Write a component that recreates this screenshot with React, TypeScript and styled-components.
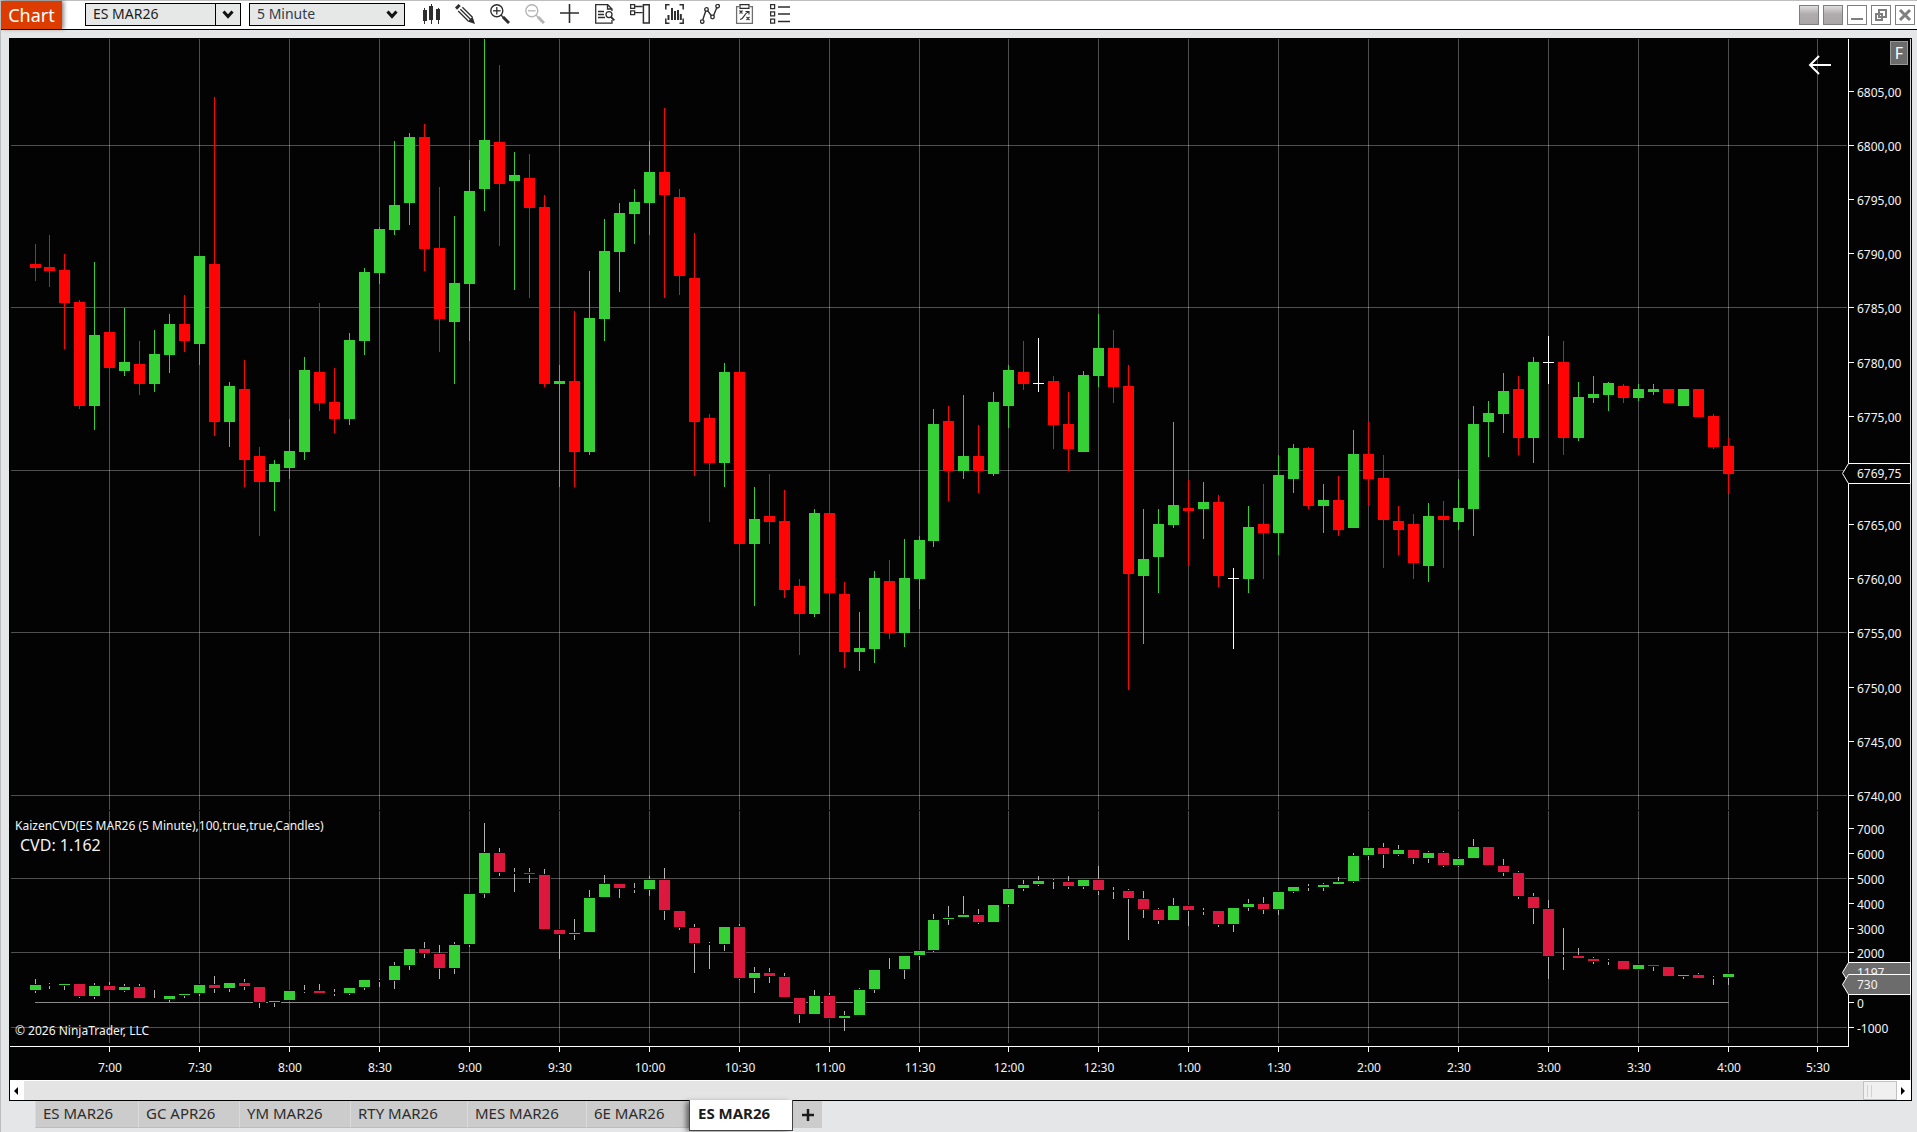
import React from "react";
import styled, { createGlobalStyle, css } from "styled-components";

const uiFont = `"Noto Sans", "Open Sans", sans-serif`;

const GlobalStyle = createGlobalStyle`
  *, *::before, *::after { box-sizing: border-box; }
  body { margin: 0; background: #e5e6e8; font-family: ${uiFont}; }
  button, input, select { font-family: inherit; margin: 0; }
`;

const Window = styled.div`
  min-height: 100vh;
  display: flex;
  flex-direction: column;
  background: #e5e6e8;
  border-left: 1px solid #bcbcbe;
  overflow: hidden;
`;

/* ---------- toolbar ---------- */

const Toolbar = styled.header`
  display: flex;
  align-items: stretch;
  height: 30px;
  background: #fff;
  border-top: 1px solid #bebebe;
  border-bottom: 1px solid #000;
`;

const MenuButton = styled.button`
  width: 61px;
  padding: 0;
  border: 0;
  background: #dc3c00;
  color: #fff;
  font-size: 18px;
  line-height: 28px;
  box-shadow: 2px 0 4px rgba(0, 0, 0, 0.45);
`;

const Combo = styled.div`
  position: relative;
  display: flex;
  width: 156px;
  height: 23px;
  margin-top: 2px;
  margin-left: 23px;
  border: 1px solid #000;
  background: #e6e8e7;
`;

const ComboInput = styled.input`
  flex: 1;
  min-width: 0;
  padding: 0 0 2px 7px;
  border: 0;
  background: transparent;
  color: #1c1c1c;
  font-size: 14px;
  line-height: 19px;
`;

const ComboButton = styled.button`
  display: grid;
  place-items: center;
  width: 25px;
  padding: 0;
  border: 0;
  border-left: 1px solid #000;
  background: transparent;
`;

const IntervalCombo = styled(Combo)`
  margin-left: 8px;
`;

const IntervalSelect = styled.select`
  flex: 1;
  padding: 0 0 2px 7px;
  border: 0;
  appearance: none;
  background: transparent;
  color: #35394a;
  font-size: 14px;
  line-height: 19px;
`;

const SelectArrow = styled.span`
  position: absolute;
  inset: 0 6px 0 auto;
  display: grid;
  place-items: center;
  pointer-events: none;
`;

const Tools = styled.div`
  display: flex;
  gap: 15px;
  margin-top: 3px;
  margin-left: 15px;
`;

const ToolButton = styled.button<{ $dim?: boolean }>`
  width: 20px;
  height: 20px;
  padding: 0;
  border: 0;
  background: transparent;
  color: ${(p) => (p.$dim ? "#b4b4b4" : "#2e2e2e")};

  svg { display: block; }
`;

const WindowButtons = styled.div`
  display: flex;
  gap: 4px;
  margin: 4px 2px 0 auto;
`;

const WindowButton = styled.button<{ $filled?: boolean }>`
  width: 20px;
  height: 20px;
  padding: 0;
  border: 1px solid #7f7f7f;
  background: ${(p) =>
    p.$filled ? "linear-gradient(#dedcdd, #b0acae 45%, #aaa6a8)" : "#fff"};

  svg { display: block; }
`;

/* ---------- chart ---------- */

const Frame = styled.main`
  margin: 8px 5px 0 8px;
  border: 1px solid #000;
  background: #030303;
`;

const ChartArea = styled.section`
  position: relative;
`;

const Plot = styled.svg`
  display: block;
  width: 100%;
  height: auto;
  font-family: ${uiFont};
  font-size: 12px;
`;

const FixedScaleButton = styled.button`
  position: absolute;
  top: 2px;
  right: 3px;
  width: 18px;
  height: 24px;
  padding: 0;
  border: 1px solid #989898;
  background: #6b6b6b;
  color: #fff;
  font-size: 16px;
  line-height: 22px;
`;

const BackButton = styled.button`
  position: absolute;
  top: 15px;
  right: 79px;
  width: 24px;
  height: 22px;
  padding: 0;
  border: 0;
  background: transparent;

  svg { display: block; }
`;

const ScrollBar = styled.div`
  display: flex;
  align-items: stretch;
  height: 20px;
  border-top: 1px solid #fff;
  background: #e4e4e4;
`;

const ScrollArrow = styled.button`
  display: grid;
  place-items: center;
  width: 14px;
  padding: 0 2px 0 0;
  border: 0;
  background: #fff;
`;

const ScrollThumb = styled.div`
  display: flex;
  align-items: center;
  gap: 3px;
  width: 34px;
  margin-left: auto;
  padding-left: 3px;
  border: 1px solid #c2c2c2;
  background: #f0f0f0;

  &::before, &::after {
    content: "";
    width: 1px;
    height: 12px;
    background: #d2d2d2;
  }
`;

/* ---------- tabs ---------- */

const Tabs = styled.nav`
  display: flex;
  align-items: flex-start;
  height: 31px;
  padding-left: 34px;
`;

const Tab = styled.button<{ $width: number; $active?: boolean }>`
  width: ${(p) => p.$width}px;
  height: 27px;
  padding: 0 0 2px 7px;
  border: 0;
  border-left: 1px solid #dadada;
  border-bottom: 1px solid #bcbcbc;
  background: #cccccc;
  color: #2c2c2c;
  font-size: 15px;
  line-height: 24px;
  text-align: left;
  white-space: nowrap;

  ${(p) =>
    p.$active &&
    css`
      height: 31px;
      margin-top: -1px;
      padding: 0 0 5px 8px;
      border: solid #444;
      border-width: 0 1px 1px 1px;
      background: #fff;
      color: #1c1c1c;
      font-weight: 700;
      box-shadow: -4px 1px 5px -1px rgba(0, 0, 0, 0.5);
      position: relative;
    `}
`;

const AddTab = styled.button`
  display: grid;
  place-items: center;
  width: 29px;
  height: 27px;
  padding: 0;
  border: 0;
  background: #cccccc;
`;

/* ---------- icons ---------- */

const Chevron = () => (
  <svg width="12" height="10" viewBox="0 0 12 10" fill="none" stroke="#111" strokeWidth="3">
    <path d="M1.5 1.5 6 6.6 10.5 1.5" />
  </svg>
);

const Icon = ({ children }: { children: React.ReactNode }) => (
  <svg width="20" height="20" viewBox="0 0 20 20" fill="none" stroke="currentColor">
    {children}
  </svg>
);

const Magnifier = ({ plus }: { plus?: boolean }) => (
  <Icon>
    <circle cx="6.8" cy="6.8" r="6" strokeWidth="1.4" />
    <path d="M3 6.8h7.6" strokeWidth="1.3" />
    {plus && <path d="M6.8 3v7.6" strokeWidth="1.3" />}
    <path d="m11 11 2.4 2.4" strokeWidth="1.4" />
    <path d="m13 13 6 6" strokeWidth="3" />
  </Icon>
);

const tools: { label: string; dim?: boolean; icon: React.ReactNode }[] = [
  {
    label: "Chart style",
    icon: (
      <Icon>
        <g fill="currentColor" stroke="none">
          <path d="M3 6h4v11H3zM9 2h4v14H9zM16 5h4v11h-4z" />
          <path d="M4 4h1v16H4zM11 0h1v20h-1zM18 4h1v16h-1z" />
        </g>
      </Icon>
    ),
  },
  {
    label: "Drawing tools",
    icon: (
      <Icon>
        <path d="M1 4.6 4.6 1" strokeWidth="3" />
        <path d="m3.2 7 10 10M5.4 5.2l10 10M7.4 3.2l10 10" strokeWidth="1.3" />
        <path d="m12.6 17.4 5-4.6 2.4 7.2z" fill="currentColor" stroke="none" />
      </Icon>
    ),
  },
  { label: "Zoom in", icon: <Magnifier plus /> },
  { label: "Zoom out", dim: true, icon: <Magnifier /> },
  {
    label: "Crosshair",
    icon: (
      <Icon>
        <path d="M9.5 0v19M0 9h19" strokeWidth="1.6" />
      </Icon>
    ),
  },
  {
    label: "Data box",
    icon: (
      <Icon>
        <path d="M15 19.2H.7V.7h12L17 5v2M12.5.7V5H17M17 16v3.2h-3" strokeWidth="1.3" />
        <path d="M3 7.5h6M3 10.5h6M3 13.5h7" strokeWidth="1.4" />
        <circle cx="14" cy="10.6" r="3" strokeWidth="1.3" />
        <path d="m16 13 3.4 3.4" strokeWidth="1.8" />
      </Icon>
    ),
  },
  {
    label: "Chart trader",
    icon: (
      <Icon>
        <path d="M.6.6h4v3.8h-4zM.6 6.8h4v3.8h-4zM4.6 2.5h8M4.6 8.7h8" strokeWidth="1.3" />
        <path d="M13.4.7h5.8v18.4h-5.8z" strokeWidth="1.5" />
      </Icon>
    ),
  },
  {
    label: "Data series",
    icon: (
      <Icon>
        <path d="M4.5.8H.8v4.7M14.5.8h3.7v4.7M4.5 19.2H.8v-4.7M14.5 19.2h3.7v-4.7" strokeWidth="1.5" />
        <path d="M3.5 11v5M7 4v12M10 7v9M13 6v10M15.8 10v6" strokeWidth="2" />
      </Icon>
    ),
  },
  {
    label: "Indicators",
    icon: (
      <Icon>
        <path d="m2.8 15.8 3-9M7.6 6.6l4 5.4M13.4 12l3.6-9" strokeWidth="1.4" />
        <circle cx="2.2" cy="17.6" r="1.8" strokeWidth="1.3" />
        <circle cx="6.5" cy="5.4" r="1.8" strokeWidth="1.3" />
        <circle cx="12.5" cy="13" r="1.8" strokeWidth="1.3" />
        <circle cx="17.6" cy="2.2" r="1.8" strokeWidth="1.3" />
      </Icon>
    ),
  },
  {
    label: "Strategies",
    icon: (
      <Icon>
        <path d="M4 2.6H1.6v16.7h15.8V2.6H15" stroke="#6e6e6e" strokeWidth="1.3" />
        <path d="M5 .7h9v3.6H5z" strokeWidth="1.2" />
        <path d="m4.5 6.5 3 3m0-3-3 3M11.5 13l3 3m0-3-3 3M5 15.5c4 0 3.5-6 8.5-7.5M10.5 7.5H14v3" strokeWidth="1.1" />
      </Icon>
    ),
  },
  {
    label: "Properties",
    icon: (
      <Icon>
        <path d="M.6.6h4v4h-4zM.6 7.8h4v4h-4zM.6 15.2h4v4h-4z" strokeWidth="1.3" />
        <path d="M8 3h12M8 10h12M8 17.5h12" strokeWidth="1.5" />
      </Icon>
    ),
  },
];

/* ---------- chart data ---------- */

// Each bar: colour key, then wick top, body top, body bottom and wick bottom in plot units.
type Bar = [string, number, number, number, number];

const parseBars = (source: string): Bar[] =>
  source
    .trim()
    .split(/\s+/)
    .map((item) => {
      const [a, b, c, d] = item.slice(1).split(",").map(Number);
      return [item[0], a, b, c, d];
    });

const priceBars = parseBars(`
R244,264,268,281 R235,267,271,287 R254,270,303,349 R300,302,406,409 G262,335,406,430
R298,332,368,376 G308,362,371,376 R341,364,384,395 G330,354,384,392 G314,324,355,373
R295,324,341,352 G256,256,344,365 R97,264,422,436 G382,386,422,447 R360,389,460,487
R447,456,482,536 G460,464,482,511 G419,451,468,479 G357,370,452,460 R303,372,403,411
R368,402,419,433 G333,340,419,425 G268,272,341,355 G227,229,273,284 G141,205,230,235
G133,137,203,225 R124,137,249,271 R187,248,319,352 G216,283,322,384 G160,191,284,341
G39,140,189,211 R65,142,184,246 G152,175,181,290 R154,178,208,298 R195,207,384,387
G365,381,384,487 R311,381,452,487 G271,318,452,455 G219,251,319,341 G203,213,252,292
G189,202,214,244 G141,172,203,235 R108,172,195,298 R189,197,276,295 R233,278,422,476
R414,418,463,522 G363,372,463,487 R341,372,544,552 G487,519,544,606 R474,516,522,544
R490,521,590,598 R579,586,614,655 G509,513,614,617 R503,513,593,601 R582,594,652,668
G612,648,652,671 G571,578,649,663 R560,581,633,639 G539,578,633,647 G536,540,579,609
G409,424,541,547 R406,421,471,501 G395,456,471,479 R425,456,471,493 G392,402,474,476
G365,370,406,428 R341,372,384,390 W338,383,384,392 R376,381,425,449 R392,424,449,471
G371,375,452,452 G314,348,376,387 R330,348,387,403 R365,386,574,690 G509,559,576,644
G509,524,557,593 G422,505,525,528 R480,508,511,566 G482,502,509,539 R495,502,576,587
W568,578,579,649 G506,527,579,593 R484,524,533,579 G455,475,533,555 G444,448,479,493
R447,448,506,509 G484,500,506,533 R476,500,530,536 G430,454,528,528 R422,454,479,506
R455,478,520,568 R506,521,530,555 R514,524,563,579 G503,516,566,582 R501,516,520,568
G479,508,522,530 G406,424,509,536 G401,413,422,457 G373,391,414,433 R376,389,438,455
G357,362,438,463 W336,362,363,384 R341,362,438,455 G382,397,438,441 G376,394,398,403
G382,383,395,411 R384,386,398,403 G384,389,398,401 G384,389,392,395 R389,389,403,403
G389,389,406,406 R389,389,417,417 R414,416,447,449 R438,446,474,493
`);

const cvdBars = parseBars(`
G979,985,990,993 D983,985,985,989 G984,984,985,990 R984,984,996,998 G983,986,996,999
R982,986,990,990 G984,987,990,992 R984,987,998,998 D990,999,999,998 G996,996,999,1002
G994,994,995,998 G984,985,993,996 R976,985,988,993 G982,983,988,992 R979,983,986,990
R987,987,1002,1008 G1001,1001,1002,1007 G990,991,1000,1000 D985,991,991,993 R984,991,993,993
D989,993,993,996 G988,988,993,995 G980,980,987,990 D979,981,981,987 G962,966,980,989
G949,949,965,970 R942,949,953,958 R945,954,968,979 G942,945,968,974 G893,894,944,947
G823,853,893,898 R848,853,872,876 D868,873,873,892 R868,873,874,883 R869,875,929,929
R930,930,934,959 G919,933,934,940 G890,898,932,932 G875,884,897,897 R884,884,888,898
D883,889,889,893 G876,880,889,896 R868,880,910,920 R911,911,927,930 R924,928,943,973
D942,944,944,969 G927,927,944,951 R924,927,978,980 G967,973,978,993 R968,973,976,983
R973,977,997,997 R998,998,1014,1023 G990,996,1014,1014 R993,996,1018,1018 G1011,1016,1018,1031
G988,990,1015,1015 G970,970,989,993 D958,970,970,969 G956,956,969,979 G951,951,955,960
G914,920,950,952 G906,918,919,925 G896,915,917,917 R909,915,922,924 G905,905,922,922
G889,889,904,907 G880,885,888,891 G876,881,884,886 D879,881,881,889 R876,882,886,889
G880,880,886,889 R866,880,890,895 D887,891,891,899 R889,891,898,940 R891,899,909,918
R908,910,920,924 G898,906,920,920 R905,906,910,926 D908,911,911,915 R911,911,924,927
G908,908,924,932 G899,904,907,911 R897,904,909,914 G892,892,909,915 G887,887,891,893
D884,887,887,891 G883,885,887,891 G877,882,884,884 G853,856,881,883 G848,848,855,860
R843,848,854,868 G845,850,854,856 R850,850,858,864 G851,853,858,863 R851,853,865,867
G857,859,865,867 G839,847,858,858 R847,847,865,865 R859,866,872,876 R871,873,896,899
R893,897,908,924 R900,909,956,979 D928,956,956,970 R948,956,958,958 R957,959,961,964
D959,961,961,965 R961,961,969,969 G965,965,969,969 R965,965,966,971 R967,967,976,976
G975,975,976,979 R973,975,978,978 D976,978,978,985 G974,974,977,985
`);

const BAR_STEP = 14.983;
const barX = (index: number) => Math.floor(35.01 + index * BAR_STEP);

const timeLabels = [
  "7:00", "7:30", "8:00", "8:30", "9:00", "9:30", "10:00", "10:30", "11:00", "11:30",
  "12:00", "12:30", "1:00", "1:30", "2:00", "2:30", "3:00", "3:30", "4:00", "5:30",
].map((text, n) => ({ text, x: barX(5 + n * 6) }));

const priceLabels = Array.from({ length: 14 }, (_, n) => {
  const price = 6805 - n * 5;
  return { price, y: Math.floor(145.4 + ((6800 - price) * 65) / 6) };
});

const cvdLabels = [7000, 6000, 5000, 4000, 3000, 2000, 0, -1000].map((value) => ({
  value,
  y: Math.round(1002 - value * 0.0248),
}));

// The last-price marker covers the axis label of this price.
const COVERED_PRICE = 6770;

const priceColors: Record<string, string> = { R: "#ff0404", G: "#36d036", W: "#ffffff" };
const cvdColors: Record<string, string> = { R: "#dc183f", G: "#36d036", D: "#030303" };

const Marker = ({ y, value, fill }: { y: number; value: string; fill: string }) => (
  <g>
    <path d={`M1842.5 ${y + 0.5}l6-10h62v20h-62z`} fill={fill} stroke="#fff" strokeWidth="1" />
    <text x="1857" y={y + 5} fill="#f4f4f4">
      {value}
    </text>
  </g>
);

const Chart = () => (
  <Plot viewBox="10 39 1901 1041" role="img" aria-label="ES MAR26 5 minute candlestick chart">
    <g shapeRendering="crispEdges">
      <g fill="#fff" fillOpacity="0.3">
        {timeLabels.map(({ text, x }) => (
          <React.Fragment key={text}>
            <rect x={x} y="39" width="1" height="771" />
            <rect x={x} y="811" width="1" height="232" />
          </React.Fragment>
        ))}
        {priceLabels
          .filter(({ price }) => (6800 - price) % 15 === 0)
          .map(({ price, y }) => (
            <rect key={price} x="11" y={y} width="1836" height="1" />
          ))}
        {cvdLabels
          .filter(({ value }) => [5000, 2000, -1000].includes(value))
          .map(({ value, y }) => (
            <rect key={value} x="11" y={y} width="1836" height="1" />
          ))}
      </g>
      <rect x="35" y="1002" width="1694" height="1" fill="#8a8a8a" />

      {priceBars.map(([kind, high, top, bottom, low], n) => (
        <g key={n} fill={priceColors[kind]}>
          <rect x={barX(n)} y={high} width="1" height={low - high} />
          <rect x={barX(n) - 5} y={top} width="11" height={bottom - top} />
        </g>
      ))}

      {cvdBars.map(([kind, high, top, bottom, low], n) => (
        <g key={n}>
          <rect x={barX(n)} y={high} width="1" height={low - high} fill="#b4b4b4" />
          <rect x={barX(n) - 6} y={top - 1} width="13" height={bottom - top + 2} fill="#030303" />
          <rect x={barX(n) - 5} y={top} width="11" height={bottom - top} fill={cvdColors[kind]} />
        </g>
      ))}

      <g fill="#fff">
        <rect x="10" y="1046" width="1839" height="1" />
        <rect x="1848" y="39" width="1" height="1008" />
        <rect x="1910" y="39" width="1" height="1041" fill="#d8d4d4" />
        {timeLabels.map(({ text, x }) => (
          <rect key={text} x={x} y="1046" width="1" height="6" />
        ))}
        {[...priceLabels, ...cvdLabels].map(({ y }) => (
          <rect key={y} x="1848" y={y} width="6" height="1" />
        ))}
      </g>
    </g>

    <g fill="#f4f4f4">
      {timeLabels.map(({ text, x }) => (
        <text key={text} x={x + 1} y="1072" textAnchor="middle">
          {text}
        </text>
      ))}
      {priceLabels
        .filter(({ price }) => price !== COVERED_PRICE)
        .map(({ price, y }) => (
          <text key={price} x="1857" y={y + 6}>
            {`${price},00`}
          </text>
        ))}
      {cvdLabels.map(({ value, y }) => (
        <text key={value} x="1857" y={y + 6}>
          {value}
        </text>
      ))}
      <text x="15" y="830">KaizenCVD(ES MAR26 (5 Minute),100,true,true,Candles)</text>
      <text x="20" y="851" fontSize="16">CVD: 1.162</text>
      <text x="15" y="1035">© 2026 NinjaTrader, LLC</text>
    </g>

    <Marker y={473} value="6769,75" fill="#030303" />
    <Marker y={972} value="1197" fill="#6c6c6c" />
    <Marker y={984} value="730" fill="#6c6c6c" />
  </Plot>
);

/* ---------- page ---------- */

const tabs = [
  { label: "ES MAR26", width: 103 },
  { label: "GC APR26", width: 101 },
  { label: "YM MAR26", width: 111 },
  { label: "RTY MAR26", width: 117 },
  { label: "MES MAR26", width: 119 },
  { label: "6E MAR26", width: 103 },
  { label: "ES MAR26", width: 104, active: true },
];

export default function App() {
  return (
    <Window>
      <GlobalStyle />
      <Toolbar>
        <MenuButton>Chart</MenuButton>
        <Combo>
          <ComboInput aria-label="Instrument" defaultValue="ES MAR26" />
          <ComboButton aria-label="Show instruments">
            <Chevron />
          </ComboButton>
        </Combo>
        <IntervalCombo>
          <IntervalSelect aria-label="Interval" defaultValue="5 Minute">
            <option>5 Minute</option>
          </IntervalSelect>
          <SelectArrow>
            <Chevron />
          </SelectArrow>
        </IntervalCombo>
        <Tools>
          {tools.map(({ label, dim, icon }) => (
            <ToolButton key={label} aria-label={label} $dim={dim}>
              {icon}
            </ToolButton>
          ))}
        </Tools>
        <WindowButtons>
          <WindowButton $filled aria-label="Instrument link" />
          <WindowButton $filled aria-label="Interval link" />
          <WindowButton aria-label="Minimize">
            <svg width="18" height="18" viewBox="0 0 18 18" fill="#7f7f7f">
              <path d="M3 12h12v2H3z" />
            </svg>
          </WindowButton>
          <WindowButton aria-label="Restore">
            <svg width="18" height="18" viewBox="0 0 18 18" fill="none" stroke="#7f7f7f" strokeWidth="2">
              <path d="M7 4h7v7H7zM4 8h6v6H4z" />
            </svg>
          </WindowButton>
          <WindowButton aria-label="Close">
            <svg width="18" height="18" viewBox="0 0 18 18" fill="none" stroke="#7f7f7f" strokeWidth="3">
              <path d="m4 4 10 10M14 4 4 14" />
            </svg>
          </WindowButton>
        </WindowButtons>
      </Toolbar>

      <Frame>
        <ChartArea>
          <Chart />
          <BackButton aria-label="Return to latest bar">
            <svg width="24" height="22" viewBox="0 0 24 22" fill="none" stroke="#fff" strokeWidth="2">
              <path d="M2 11h21M11 2l-9 9 9 9" />
            </svg>
          </BackButton>
          <FixedScaleButton aria-label="Fixed scale">F</FixedScaleButton>
        </ChartArea>
        <ScrollBar>
          <ScrollArrow aria-label="Scroll left">
            <svg width="4" height="8" viewBox="0 0 4 8">
              <path d="M4 0v8L0 4z" />
            </svg>
          </ScrollArrow>
          <ScrollThumb />
          <ScrollArrow aria-label="Scroll right">
            <svg width="4" height="8" viewBox="0 0 4 8">
              <path d="M0 0v8l4-4z" />
            </svg>
          </ScrollArrow>
        </ScrollBar>
      </Frame>

      <Tabs aria-label="Chart tabs">
        {tabs.map(({ label, width, active }, n) => (
          <Tab key={n} $width={width} $active={active}>
            {label}
          </Tab>
        ))}
        <AddTab aria-label="Add tab">
          <svg width="14" height="14" viewBox="0 0 14 14" fill="none" stroke="#1c1c1c" strokeWidth="2.5">
            <path d="M7 1v12M1 7h12" />
          </svg>
        </AddTab>
      </Tabs>
    </Window>
  );
}
